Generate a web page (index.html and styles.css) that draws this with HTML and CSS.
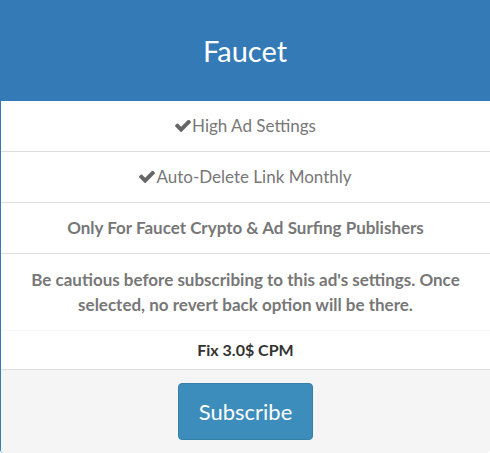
FILE: index.html
```html
<!DOCTYPE html>
<html>
<head>
<meta charset="utf-8">
<link rel="stylesheet" href="styles.css">
</head>
<body>
<div class="panel">
  <div class="header">Faucet</div>
  <ul class="features">
    <li class="row"><svg class="check" viewBox="121 362 1550 1164"><path d="M1671 566q0 40-28 68l-724 724-136 136q-28 28-68 28t-68-28l-136-136-362-362q-28-28-28-68t28-68l136-136q28-28 68-28t68 28l294 295 656-657q28-28 68-28t68 28l136 136q28 28 28 68z"/></svg>High Ad Settings</li>
    <li class="row"><svg class="check" viewBox="121 362 1550 1164"><path d="M1671 566q0 40-28 68l-724 724-136 136q-28 28-68 28t-68-28l-136-136-362-362q-28-28-28-68t28-68l136-136q28-28 68-28t68 28l294 295 656-657q28-28 68-28t68 28l136 136q28 28 28 68z"/></svg>Auto-Delete Link Monthly</li>
    <li class="row bold">Only For Faucet Crypto &amp; Ad Surfing Publishers</li>
    <li class="row bold warn">Be cautious before subscribing to this ad's settings. Once selected, no revert back option will be there.</li>
    <li class="row price">Fix 3.0$ CPM</li>
  </ul>
  <div class="footer"><button class="btn">Subscribe</button></div>
</div>
</body>
</html>
```
FILE: styles.css
```css
html, body { margin: 0; padding: 0; background: #fff; }
body { font-family: "Lato", "Noto Sans", sans-serif; overflow: hidden; }
.panel { width: 490px; height: 453px; border-left: 1px solid #337ab7; box-sizing: border-box; border-radius: 0 0 4px 4px; overflow: hidden; }
.header { height: 101px; background: #337ab7; color: #fff; font-size: 29px; display: flex; align-items: center; justify-content: center; margin-left: -1px; }
.features { list-style: none; margin: 0; padding: 0; }
.row { color: #777; font-size: 17px; line-height: 20px; padding: 15px 10px; border-bottom: 1px solid #ddd; text-align: center; display: flex; align-items: center; justify-content: center; }
.check { width: 16px; height: 12px; fill: #666; margin-right: 1px; }
.bold { font-weight: bold; }
.warn { display: block; line-height: 25px; padding: 13px 20px 13px; border-bottom-color: #f7f7f7; }
.price { font-weight: bold; color: #333; font-size: 16px; padding: 9px 10px; line-height: 20px; }
.footer { background: #f5f5f5; height: 83px; display: flex; justify-content: center; padding-top: 13px; box-sizing: border-box; }
.btn { width: 135px; height: 57px; background: #3c8dbc; border: 1px solid #367fa9; border-radius: 4px; color: #fff; font-family: inherit; font-size: 22px; padding: 0; }
```
